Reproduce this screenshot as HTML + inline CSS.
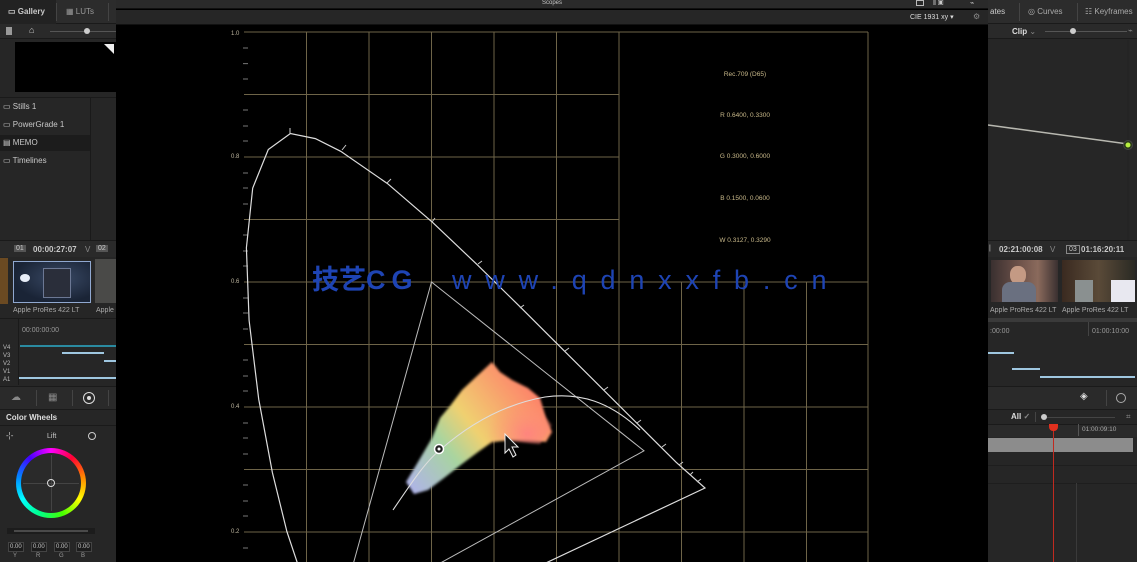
<!DOCTYPE html>
<html><head><meta charset="utf-8">
<style>
*{margin:0;padding:0;box-sizing:border-box}
html,body{width:1137px;height:562px;overflow:hidden}
body{background:#000;font-family:"Liberation Sans",sans-serif;color:#bbb;position:relative}
.a{position:absolute}
.t{font-size:8px;color:#c8c8c8;white-space:nowrap}
</style></head><body>
<!-- LEFT PANEL -->
<div class="a" style="left:0;top:0;width:116px;height:562px;background:#262626"></div>
<div class="a" style="left:0;top:0;width:116px;height:24px;background:#2c2c2c;border-bottom:1px solid #1a1a1a"></div>
<div class="a" style="left:0;top:0;width:56px;height:24px;background:#222"></div>
<div class="a t" style="left:8px;top:7px;font-weight:bold">▭ Gallery</div>
<div class="a t" style="left:66px;top:7px;color:#999">▦ LUTs</div>
<div class="a" style="left:56px;top:3px;width:1px;height:18px;background:#444"></div>
<div class="a" style="left:108px;top:3px;width:1px;height:18px;background:#444"></div>
<div class="a" style="left:0;top:24px;width:116px;height:15px;background:#2a2a2a;border-bottom:1px solid #1a1a1a"></div>
<div class="a" style="left:6px;top:27px;width:6px;height:8px;background:#999"></div>
<div class="a t" style="left:29px;top:25px;font-size:9px">⌂</div>
<div class="a" style="left:50px;top:31px;width:66px;height:1px;background:#555"></div>
<div class="a" style="left:84px;top:28px;width:6px;height:6px;border-radius:50%;background:#ccc"></div>
<div class="a" style="left:15px;top:42px;width:101px;height:50px;background:#000"></div>
<div class="a" style="left:104px;top:44px;width:0;height:0;border-left:10px solid transparent;border-top:10px solid #eee"></div>
<div class="a" style="left:0;top:97px;width:116px;height:1px;background:#1a1a1a"></div>
<div class="a" style="left:90px;top:97px;width:1px;height:143px;background:#1a1a1a"></div>
<div class="a" style="left:0;top:135px;width:90px;height:16px;background:#1c1c1c"></div>
<div class="a t" style="left:3px;top:102px">▭ Stills 1</div>
<div class="a t" style="left:3px;top:120px">▭ PowerGrade 1</div>
<div class="a t" style="left:3px;top:138px">▤ MEMO</div>
<div class="a t" style="left:3px;top:156px">▭ Timelines</div>
<div class="a" style="left:0;top:240px;width:116px;height:1px;background:#1a1a1a"></div>
<div class="a" style="left:0;top:241px;width:116px;height:16px;background:#2a2a2a"></div>
<div class="a t" style="left:14px;top:245px;background:#555;padding:0 2px;font-size:7px">01</div>
<div class="a t" style="left:33px;top:245px;font-weight:bold">00:00:27:07</div>
<div class="a t" style="left:85px;top:245px;color:#888">V</div>
<div class="a t" style="left:96px;top:245px;background:#555;padding:0 2px;font-size:7px">02</div>
<div class="a" style="left:0;top:258px;width:8px;height:46px;background:#6b4a22"></div>
<div class="a" style="left:13px;top:261px;width:78px;height:42px;background:radial-gradient(ellipse at 60% 40%,#3a4a66,#1a2436 70%);border:1px solid #90a8d0"></div>
<div class="a" style="left:20px;top:274px;width:10px;height:8px;border-radius:50%;background:#e8eef8"></div>
<div class="a" style="left:43px;top:268px;width:28px;height:30px;background:#2a2e3a;border:1px solid #6c7894"></div>
<div class="a" style="left:95px;top:259px;width:21px;height:44px;background:#4a4a48"></div>
<div class="a t" style="left:13px;top:307px;font-size:7px;color:#aaa">Apple ProRes 422 LT</div>
<div class="a t" style="left:96px;top:307px;font-size:7px;color:#aaa">Apple</div>
<div class="a" style="left:0;top:318px;width:116px;height:1px;background:#1a1a1a"></div>
<div class="a" style="left:18px;top:319px;width:1px;height:66px;background:#1a1a1a"></div>
<div class="a t" style="left:22px;top:327px;font-size:7px;color:#999">00:00:00:00</div>
<div class="a" style="left:20px;top:345px;width:96px;height:2px;background:#2a8aa0"></div>
<div class="a" style="left:62px;top:352px;width:42px;height:2px;background:#9fc7e0"></div>
<div class="a" style="left:104px;top:360px;width:12px;height:2px;background:#9fc7e0"></div>
<div class="a" style="left:19px;top:377px;width:97px;height:2px;background:#9fc7e0"></div>
<div class="a t" style="left:3px;top:344px;font-size:6px;line-height:8px;color:#bbb">V4<br>V3<br>V2<br>V1<br>A1</div>
<div class="a" style="left:0;top:386px;width:116px;height:1px;background:#1a1a1a"></div>
<div class="a" style="left:0;top:387px;width:116px;height:22px;background:#2a2a2a"></div>
<div class="a" style="left:36px;top:390px;width:1px;height:16px;background:#444"></div>
<div class="a" style="left:72px;top:390px;width:1px;height:16px;background:#444"></div>
<div class="a" style="left:108px;top:390px;width:1px;height:16px;background:#444"></div>
<div class="a t" style="left:11px;top:392px;color:#888;font-size:10px">☁</div>
<div class="a t" style="left:48px;top:392px;color:#888;font-size:10px">▦</div>
<div class="a" style="left:83px;top:392px;width:12px;height:12px;border:1.5px solid #ddd;border-radius:50%"></div>
<div class="a" style="left:87px;top:396px;width:4px;height:4px;background:#ddd;border-radius:50%"></div>
<div class="a" style="left:0;top:409px;width:116px;height:1px;background:#1a1a1a"></div>
<div class="a t" style="left:6px;top:413px;font-weight:bold;color:#ddd">Color Wheels</div>
<div class="a" style="left:0;top:425px;width:116px;height:1px;background:#1a1a1a"></div>
<div class="a t" style="left:6px;top:431px;color:#ccc">-¦-</div>
<div class="a t" style="left:47px;top:433px;font-size:7px">Lift</div>
<div class="a" style="left:88px;top:432px;width:8px;height:8px;border:1px solid #ccc;border-radius:50%"></div>
<div class="a" style="left:16px;top:448px;width:70px;height:70px;border-radius:50%;background:conic-gradient(from 0deg,#f0f,#f03,#f80,#ff0,#4f0,#0f8,#0ff,#08f,#40f,#f0f);"></div>
<div class="a" style="left:21px;top:453px;width:60px;height:60px;border-radius:50%;background:#2a2a2a"></div>
<div class="a" style="left:51px;top:455px;width:1px;height:56px;background:#444"></div>
<div class="a" style="left:23px;top:483px;width:56px;height:1px;background:#444"></div>
<div class="a" style="left:47px;top:479px;width:8px;height:8px;border:1px solid #ddd;border-radius:50%"></div>
<div class="a" style="left:7px;top:528px;width:88px;height:6px;background:#1c1c1c"></div>
<div class="a" style="left:14px;top:530px;width:74px;height:2px;background:#4a4a4a"></div>
<div class="a t" style="left:8px;top:542px;font-size:6px;line-height:8px;background:#1c1c1c;border:1px solid #444;padding:0 1px">0.00</div>
<div class="a t" style="left:31px;top:542px;font-size:6px;line-height:8px;background:#1c1c1c;border:1px solid #444;padding:0 1px">0.00</div>
<div class="a t" style="left:54px;top:542px;font-size:6px;line-height:8px;background:#1c1c1c;border:1px solid #444;padding:0 1px">0.00</div>
<div class="a t" style="left:76px;top:542px;font-size:6px;line-height:8px;background:#1c1c1c;border:1px solid #444;padding:0 1px">0.00</div>
<div class="a t" style="left:13px;top:553px;font-size:6px;line-height:7px;color:#999">Y</div>
<div class="a t" style="left:36px;top:553px;font-size:6px;line-height:7px;color:#999">R</div>
<div class="a t" style="left:59px;top:553px;font-size:6px;line-height:7px;color:#999">G</div>
<div class="a t" style="left:81px;top:553px;font-size:6px;line-height:7px;color:#999">B</div>

<!-- CENTER header -->
<div class="a" style="left:116px;top:0;width:872px;height:9px;background:#2a2a2a;border-bottom:1px solid #111"></div>
<div class="a t" style="left:542px;top:0;font-size:6px;line-height:7px">Scopes</div>
<div class="a" style="left:916px;top:0;width:8px;height:6px;border:1px solid #bbb"></div>
<div class="a t" style="left:933px;top:0;font-size:7px;line-height:7px">⫴ ▣</div>
<div class="a t" style="left:970px;top:0;font-size:7px;line-height:7px">⌁</div>
<div class="a" style="left:116px;top:10px;width:872px;height:15px;background:#262626;border-bottom:1px solid #111"></div>
<div class="a t" style="left:910px;top:13px;font-size:7px;color:#ddd">CIE 1931 xy ▾</div>
<div class="a t" style="left:973px;top:12px;font-size:8px;color:#888">⚙</div>

<!-- CHART -->
<svg class="a" style="left:0;top:0" width="1137" height="562" viewBox="0 0 1137 562">
<defs>
<clipPath id="c"><rect x="116" y="26" width="872" height="536"/></clipPath>
<linearGradient id="g" x1="0" y1="1" x2="1" y2="0.3">
<stop offset="0" stop-color="#b0b0f0"/><stop offset="0.35" stop-color="#a8d4a0"/><stop offset="0.55" stop-color="#f0d070"/><stop offset="1" stop-color="#ff7a6a"/></linearGradient>
<radialGradient id="g2" cx="0.7" cy="0.7" r="0.5"><stop offset="0" stop-color="#ff8080" stop-opacity="0.9"/><stop offset="1" stop-color="#ff9070" stop-opacity="0"/></radialGradient>
<filter id="b"><feGaussianBlur stdDeviation="1.2"/></filter>
</defs>
<g clip-path="url(#c)">
<g stroke="#6e6448" stroke-width="1" fill="none">
<line x1="244" y1="32" x2="868" y2="32"/>
<line x1="244" y1="94.5" x2="619" y2="94.5"/>
<line x1="244" y1="157" x2="619" y2="157"/>
<line x1="244" y1="219.5" x2="619" y2="219.5"/>
<line x1="244" y1="282" x2="868" y2="282"/>
<line x1="244" y1="344.5" x2="868" y2="344.5"/>
<line x1="244" y1="407" x2="868" y2="407"/>
<line x1="244" y1="469.5" x2="868" y2="469.5"/>
<line x1="244" y1="532" x2="868" y2="532"/>
<line x1="306.5" y1="32" x2="306.5" y2="562"/>
<line x1="369" y1="32" x2="369" y2="562"/>
<line x1="431.5" y1="32" x2="431.5" y2="562"/>
<line x1="494" y1="32" x2="494" y2="562"/>
<line x1="556.5" y1="32" x2="556.5" y2="562"/>
<line x1="619" y1="32" x2="619" y2="562"/>
<line x1="681.5" y1="282" x2="681.5" y2="562"/>
<line x1="744" y1="282" x2="744" y2="562"/>
<line x1="806.5" y1="282" x2="806.5" y2="562"/>
<line x1="868" y1="32" x2="868" y2="562"/>
</g>
<g stroke="#777" stroke-width="1">
<path d="M243 48h5M243 63.6h5M243 79h5M243 110h5M243 126h5M243 141h5M243 173h5M243 188h5M243 204h5M243 235h5M243 251h5M243 266h5M243 298h5M243 313h5M243 329h5M243 360h5M243 376h5M243 391h5M243 423h5M243 438h5M243 454h5M243 485h5M243 501h5M243 516h5M243 548h5"/>
</g>
<g fill="#bfb7a0" font-size="6" font-family="Liberation Sans">
<text x="231" y="35">1.0</text><text x="231" y="158">0.8</text><text x="231" y="283">0.6</text><text x="231" y="408">0.4</text><text x="231" y="533">0.2</text>
</g>
<g fill="#c9b98a" font-size="6.5" font-family="Liberation Sans" text-anchor="middle">
<text x="745" y="76">Rec.709 (D65)</text>
<text x="745" y="117">R 0.6400, 0.3300</text>
<text x="745" y="158">G 0.3000, 0.6000</text>
<text x="745" y="200">B 0.1500, 0.0600</text>
<text x="745" y="242">W 0.3127, 0.3290</text>
</g>
<path d="M406,482 L418,462 L432,438 L440,418 L450,406 L462,390 L478,375 L492,362 L500,372 L512,380 L528,388 L540,398 L546,418 L552,432 L546,442 L528,440 L510,440 L492,442 L478,452 L462,464 L444,478 L428,490 L414,494 Z" fill="url(#g)" filter="url(#b)"/>
<path d="M470,400 L520,385 L552,425 L540,444 L500,440 L470,455 Z" fill="url(#g2)" filter="url(#b)"/>
<path d="M352.8,653.9 L334,638.4 L321.6,620.9 L312.5,602.8 L301.1,574.1 L286.9,531.6 L272.4,472.6 L258.7,399.1 L249.1,320.5 L246.4,247.8 L252.7,188.1 L268.3,149.5 L290.4,133.5 L315.4,138.6 L340.7,151.3 L387.5,183.6 L432.5,222.3 L477.2,264.7 L521.6,308.3 L564.3,350.9 L603.5,389.9 L635.9,422.2 L676.2,462.3 L705,488 Z" fill="none" stroke="#ddd" stroke-width="1.2"/>
<g stroke="#ccc" stroke-width="1"><path d="M290,134v-6M342,150l4,-5M387,183l4,-4M432,222l3,-4M478,264l4,-3M520,308l4,-3M565,351l4,-3M604,390l4,-3M637,423l4,-3M662,447l4,-3M679,465l4,-3M690,475l3,-3M697,482l4,-3"/></g>
<path d="M431.5,282 L644,450.8 L337.8,619.5 Z" fill="none" stroke="#bbb" stroke-width="1"/>
<path d="M393,510 C410,485 425,462 440,450 C465,428 500,405 545,397 C580,392 610,402 640,430" fill="none" stroke="#ddd" stroke-width="1.1"/>
<circle cx="439" cy="449" r="4.5" fill="#222" stroke="#fff" stroke-width="1.5"/>
<circle cx="439" cy="449" r="1.5" fill="#fff"/>
<path d="M505,434 L505,453 L509,449 L513,457 L516,455 L512,447 L518,447 Z" fill="#111" stroke="#eee" stroke-width="1"/>
</g>
</svg>
<div class="a" style="left:312px;top:264px;font-size:27px;line-height:32px;font-weight:bold;color:#1e44b4;font-family:'Liberation Sans','Noto Sans CJK SC',sans-serif;white-space:nowrap">技艺<span style="letter-spacing:6px">CG</span></div>
<div class="a" style="left:452px;top:264px;font-size:27px;line-height:32px;color:#1e44b4;font-family:'Liberation Sans',sans-serif;white-space:nowrap;letter-spacing:13.8px">www.qdnxxfb.cn</div>

<!-- RIGHT PANEL -->
<div class="a" style="left:988px;top:0;width:149px;height:562px;background:#262626"></div>
<div class="a" style="left:988px;top:0;width:149px;height:24px;background:#2c2c2c;border-bottom:1px solid #1a1a1a"></div>
<div class="a t" style="left:990px;top:7px;color:#ccc">ates</div>
<div class="a" style="left:1019px;top:3px;width:1px;height:18px;background:#444"></div>
<div class="a t" style="left:1028px;top:7px;color:#aaa">◎ Curves</div>
<div class="a" style="left:1077px;top:3px;width:1px;height:18px;background:#444"></div>
<div class="a t" style="left:1085px;top:7px;color:#aaa">☷ Keyframes</div>
<div class="a" style="left:988px;top:24px;width:149px;height:15px;background:#2a2a2a;border-bottom:1px solid #1a1a1a"></div>
<div class="a t" style="left:1012px;top:27px;font-weight:bold;color:#ddd">Clip <span style="color:#888;font-weight:normal">⌄</span></div>
<div class="a" style="left:1045px;top:31px;width:82px;height:1px;background:#555"></div>
<div class="a" style="left:1070px;top:28px;width:6px;height:6px;border-radius:50%;background:#ccc"></div>
<div class="a t" style="left:1128px;top:26px;color:#888">⌁</div>
<svg class="a" style="left:988px;top:40px" width="149" height="200"><line x1="0" y1="85" x2="140" y2="104" stroke="#b8b8b0" stroke-width="1.5"/><line x1="140" y1="0" x2="140" y2="200" stroke="#222"/><circle cx="140" cy="105" r="4.5" fill="#2a3a18" stroke="#444"/><circle cx="140" cy="105" r="2.5" fill="#b8f040"/></svg>
<div class="a" style="left:988px;top:240px;width:149px;height:1px;background:#1a1a1a"></div>
<div class="a" style="left:988px;top:241px;width:149px;height:16px;background:#2a2a2a"></div>
<div class="a t" style="left:989px;top:245px;font-size:7px">|</div>
<div class="a t" style="left:999px;top:245px;font-weight:bold">02:21:00:08</div>
<div class="a t" style="left:1050px;top:245px;color:#888">V</div>
<div class="a t" style="left:1066px;top:245px;border:1px solid #888;padding:0 2px;font-size:7px">03</div>
<div class="a t" style="left:1081px;top:245px;font-weight:bold">01:16:20:11</div>
<div class="a" style="left:991px;top:260px;width:67px;height:42px;background:linear-gradient(90deg,#3a3030 0%,#6b5048 40%,#8a6a5c 70%,#3a3030 100%)"></div>
<div class="a" style="left:1010px;top:266px;width:16px;height:18px;border-radius:45%;background:#c49a84"></div>
<div class="a" style="left:1002px;top:282px;width:34px;height:20px;border-radius:8px 8px 0 0;background:#6a7080"></div>
<div class="a" style="left:1062px;top:260px;width:73px;height:42px;background:linear-gradient(90deg,#3a2a20,#5a4a38 50%,#2a2a24)"></div>
<div class="a" style="left:1075px;top:280px;width:18px;height:22px;background:#8a9090"></div>
<div class="a" style="left:1111px;top:280px;width:24px;height:22px;background:#e8e8f0"></div>
<div class="a t" style="left:990px;top:307px;font-size:7px;color:#aaa">Apple ProRes 422 LT</div>
<div class="a t" style="left:1062px;top:307px;font-size:7px;color:#aaa">Apple ProRes 422 LT</div>
<div class="a" style="left:988px;top:318px;width:149px;height:4px;background:#3a3a3a"></div>
<div class="a t" style="left:990px;top:328px;font-size:7px;color:#999">:00:00</div>
<div class="a" style="left:1088px;top:322px;width:1px;height:14px;background:#444"></div>
<div class="a t" style="left:1092px;top:328px;font-size:7px;color:#999">01:00:10:00</div>
<div class="a" style="left:988px;top:352px;width:26px;height:2px;background:#9fc7e0"></div>
<div class="a" style="left:1012px;top:368px;width:28px;height:2px;background:#9fc7e0"></div>
<div class="a" style="left:1040px;top:376px;width:95px;height:2px;background:#9fc7e0"></div>
<div class="a" style="left:988px;top:386px;width:149px;height:1px;background:#1a1a1a"></div>
<div class="a" style="left:988px;top:387px;width:149px;height:22px;background:#2a2a2a"></div>
<div class="a t" style="left:1080px;top:391px;color:#ddd;font-size:10px">◈</div>
<div class="a" style="left:1106px;top:390px;width:1px;height:16px;background:#444"></div>
<div class="a" style="left:1116px;top:393px;width:10px;height:10px;border:1px solid #aaa;border-radius:50%"></div>
<div class="a" style="left:988px;top:409px;width:149px;height:1px;background:#1a1a1a"></div>
<div class="a t" style="left:1011px;top:412px;font-weight:bold;color:#ddd">All <span style="color:#888">✓</span></div>
<div class="a" style="left:1035px;top:412px;width:1px;height:10px;background:#444"></div>
<div class="a" style="left:1041px;top:414px;width:6px;height:6px;border-radius:50%;background:#ccc"></div>
<div class="a" style="left:1047px;top:417px;width:68px;height:1px;background:#444"></div>
<div class="a t" style="left:1126px;top:412px;color:#888">⌗</div>
<div class="a" style="left:988px;top:424px;width:149px;height:13px;background:#2a2a2a;border-top:1px solid #1a1a1a"></div>
<div class="a" style="left:1078px;top:424px;width:1px;height:12px;background:#555"></div>
<div class="a t" style="left:1082px;top:426px;font-size:6.5px;color:#aaa">01:00:09:10</div>
<div class="a" style="left:988px;top:438px;width:145px;height:14px;background:#8c8c8c"></div>
<div class="a" style="left:988px;top:465px;width:149px;height:1px;background:#1e1e1e"></div>
<div class="a" style="left:988px;top:483px;width:149px;height:1px;background:#1e1e1e"></div>
<div class="a" style="left:1076px;top:483px;width:1px;height:79px;background:#3a3a3a"></div>
<div class="a" style="left:1053px;top:428px;width:1px;height:134px;background:#c02a20"></div>
<div class="a" style="left:1049px;top:424px;width:9px;height:7px;background:#e0301e;border-radius:0 0 4px 4px"></div>
</body></html>
